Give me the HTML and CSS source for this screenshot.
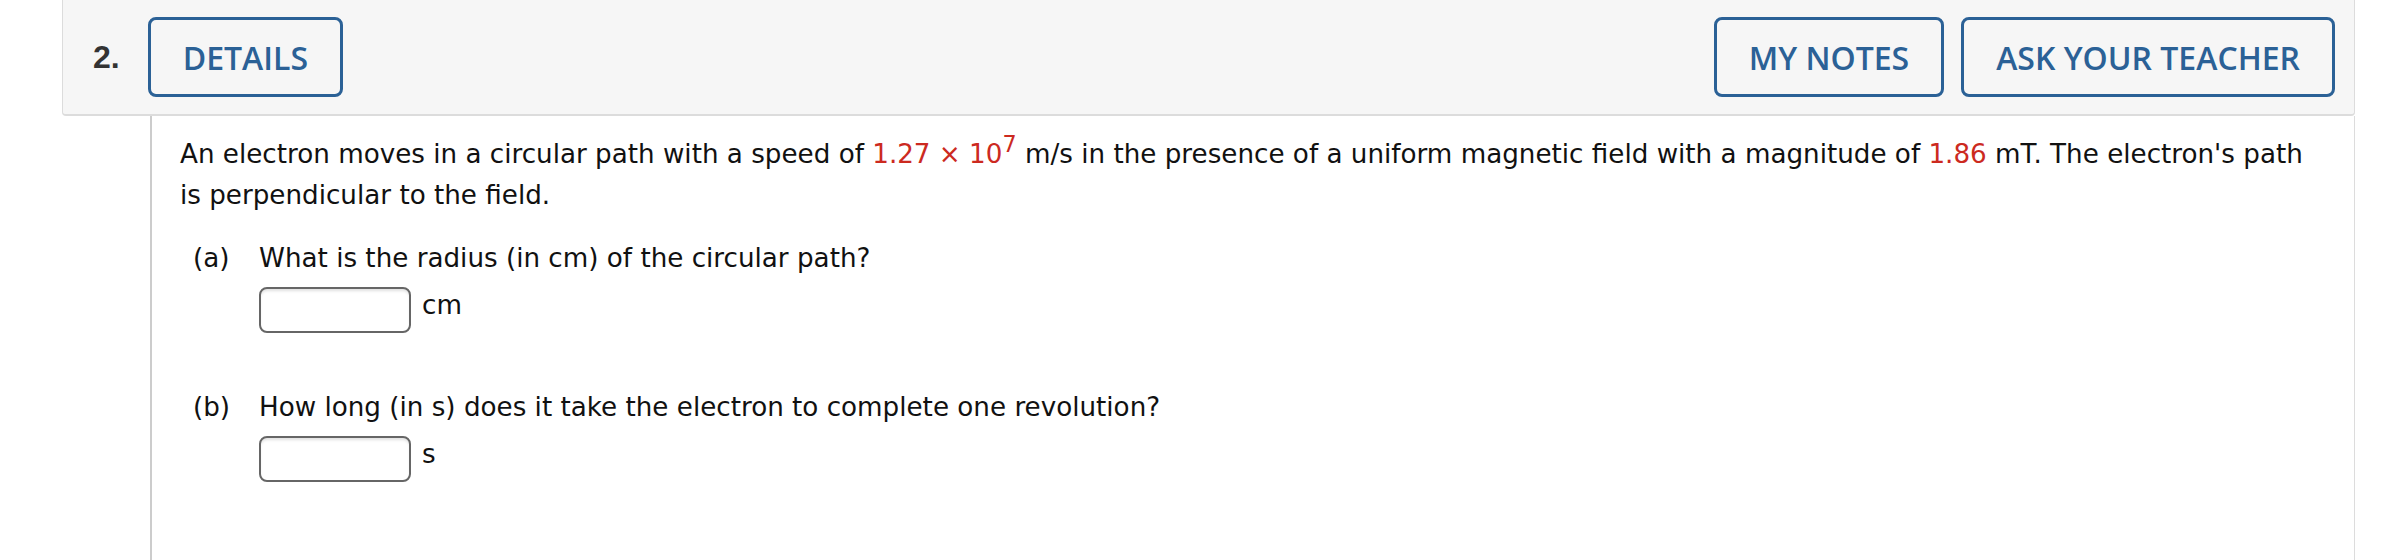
FILE: index.html
```html
<!DOCTYPE html>
<html lang="en">
<head>
<meta charset="utf-8">
<title>Question 2</title>
<link rel="stylesheet" href="styles.css">
</head>
<body>
<div class="question">
  <div class="qhead">
    <span class="qnum">2.</span>
    <button class="btn">DETAILS</button>
    <div class="spacer"></div>
    <div class="actions">
      <button class="btn">MY NOTES</button>
      <button class="btn">ASK YOUR TEACHER</button>
    </div>
  </div>
  <div class="qbody">
    <p class="stem">An electron moves in a circular path with a speed of <span class="red">1.27 &times; 10<sup>7</sup></span> m/s in the presence of a uniform magnetic field with a magnitude of <span class="red">1.86</span> mT. The electron's path is perpendicular to the field.</p>
    <div class="part part-a">
      <span class="plabel">(a)</span>
      <div class="pcontent">
        <p class="ptext">What is the radius (in cm) of the circular path?</p>
        <div class="answer"><span class="inp"></span><span class="unit">cm</span></div>
      </div>
    </div>
    <div class="part part-b">
      <span class="plabel">(b)</span>
      <div class="pcontent">
        <p class="ptext">How long (in s) does it take the electron to complete one revolution?</p>
        <div class="answer"><span class="inp"></span><span class="unit">s</span></div>
      </div>
    </div>
  </div>
</div>
</body>
</html>
```

FILE: styles.css
```css
html, body {
  margin: 0;
  padding: 0;
  background: #ffffff;
}

body {
  height: 560px;
  overflow: hidden;
}

.question {
  margin-left: 62px;
  width: 2293px;
}

.qhead {
  box-sizing: border-box;
  height: 116px;
  background: #f6f6f6;
  border-left: 1px solid #dcdcdc;
  border-right: 1px solid #dcdcdc;
  border-bottom: 2px solid #dcdcdc;
  border-radius: 0 0 4px 4px;
  display: flex;
  align-items: center;
  padding: 0 19px 0 30px;
}

.qnum {
  font-family: "Liberation Sans", Arial, sans-serif;
  font-weight: bold;
  font-size: 32px;
  color: #333333;
  margin-right: 28px;
}

.spacer {
  flex: 1;
}

.actions {
  display: flex;
  gap: 17px;
}

.btn {
  box-sizing: border-box;
  height: 80px;
  padding: 0 32px;
  background: transparent;
  border: 3px solid #2b6196;
  border-radius: 8px;
  font-family: "Open Sans", sans-serif;
  font-weight: 600;
  font-size: 32px;
  color: #2b6196;
  cursor: pointer;
}

.qbody {
  margin-left: 88px;
  border-left: 2px solid #cccccc;
  border-right: 1px solid #dcdcdc;
  height: 444px;
  padding: 18px 40px 0 28px;
  font-family: "DejaVu Sans", Verdana, sans-serif;
  font-size: 26.2px;
  line-height: 41px;
  color: #111111;
}

.stem {
  margin: 0;
}

.red {
  color: #cc2a1f;
}

sup {
  font-size: 0.85em;
  line-height: 0;
  vertical-align: 0.5em;
}

.part {
  display: flex;
  margin-top: 22px;
}

.part-b {
  margin-top: 54px;
}

.plabel {
  width: 79px;
  padding-left: 13px;
  box-sizing: border-box;
  flex: none;
}

.ptext {
  margin: 0;
}

.answer {
  display: flex;
  align-items: center;
  margin-top: 8px;
}

.inp {
  box-sizing: border-box;
  width: 152px;
  height: 46px;
  border: 2px solid #666666;
  border-radius: 8px;
  background: #ffffff;
  box-shadow: inset 0 3px 3px -1px rgba(0, 0, 0, 0.12);
}

.unit {
  margin-left: 11px;
  line-height: 36px;
  align-self: flex-start;
}
```
